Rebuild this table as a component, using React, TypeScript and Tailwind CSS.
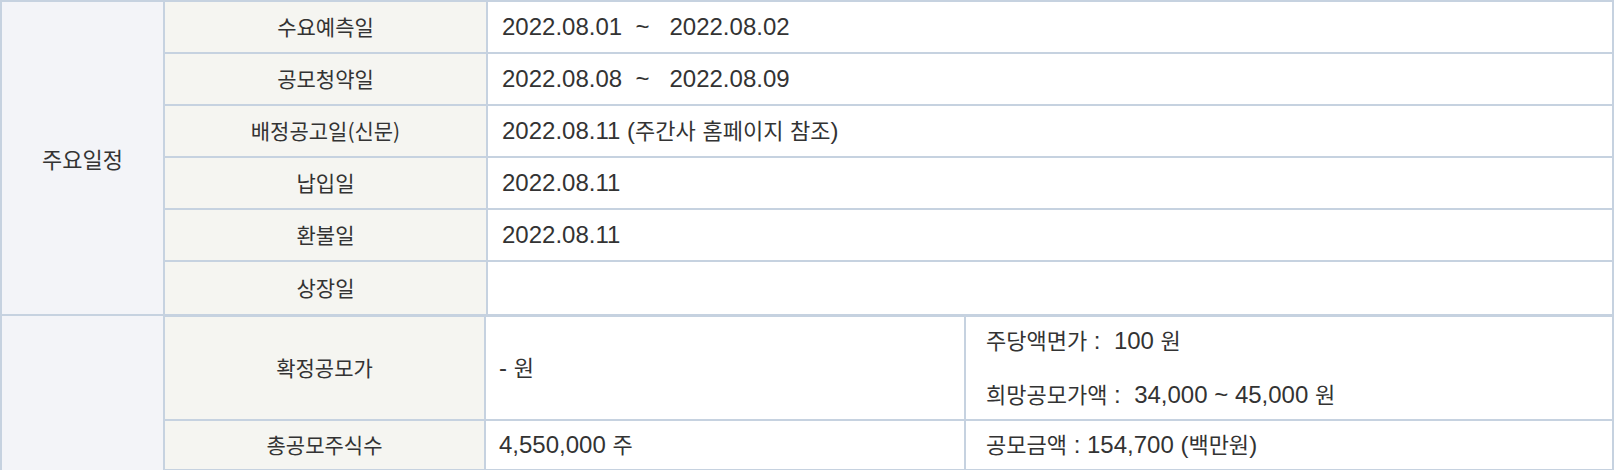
import React from 'react';

// hangul runs are set a bit smaller than the latin digits, like the original page
function Mixed({ text }: { text: string }) {
  const parts = text.split(/([\uAC00-\uD7A3]+)/);
  return (
    <>
      {parts.map((p, i) =>
        /[\uAC00-\uD7A3]/.test(p) ? (
          <span key={i} className="text-[22px]">
            {p}
          </span>
        ) : (
          <span key={i}>{p}</span>
        )
      )}
    </>
  );
}

const schedule = [
  { label: '수요예측일', value: '2022.08.01  ~   2022.08.02' },
  { label: '공모청약일', value: '2022.08.08  ~   2022.08.09' },
  { label: '배정공고일(신문)', value: '2022.08.11 (주간사 홈페이지 참조)' },
  { label: '납입일', value: '2022.08.11' },
  { label: '환불일', value: '2022.08.11' },
  { label: '상장일', value: '' },
];

const labelFont = "font-['Noto_Sans_CJK_KR',sans-serif] text-[21px]";
const valueFont = "font-['Liberation_Sans','Noto_Sans_CJK_KR',sans-serif] text-[24px]";

export default function App() {
  return (
    <div className="w-[1614px] h-[470px] bg-white text-[#333] overflow-hidden">
      {/* 주요일정 */}
      <div className="flex border-t-2 border-l-2 border-r-2 border-b-2 border-[#c6d2e0]">
        <div className="w-[163px] shrink-0 bg-[#f3f4f8] border-r-2 border-[#c6d2e0] flex items-center justify-center font-['Noto_Sans_CJK_KR',sans-serif] text-[22px]">
          주요일정
        </div>
        <div className="flex-1 flex flex-col">
          {schedule.map((row, i) => (
            <div
              key={row.label}
              className={`flex h-[52px] ${i < schedule.length - 1 ? 'border-b-2' : ''} border-[#c6d2e0]`}
            >
              <div
                className={`w-[323px] shrink-0 bg-[#f5f5f1] border-r-2 border-[#c6d2e0] flex items-center justify-center ${labelFont}`}
              >
                {row.label}
              </div>
              <div className={`flex-1 flex items-center pl-[14px] whitespace-pre ${valueFont}`}>
                <Mixed text={row.value} />
              </div>
            </div>
          ))}
        </div>
      </div>

      {/* 공모가 */}
      <div className="flex h-[156px] border-l-2 border-r-2 border-[#c6d2e0]">
        <div className="w-[163px] shrink-0 bg-[#f3f4f8] border-r-2 border-[#c6d2e0]" />
        <div className="flex-1 flex flex-col border-t border-b-2 border-[#c6d2e0] self-start">
          <div className="flex h-[104px] border-b-2 border-[#c6d2e0]">
            <div
              className={`w-[321px] shrink-0 bg-[#f5f5f1] border-r-2 border-[#c6d2e0] flex items-center justify-center ${labelFont}`}
            >
              확정공모가
            </div>
            <div
              className={`w-[480px] shrink-0 border-r-2 border-[#c6d2e0] flex items-center pl-[13px] whitespace-pre ${valueFont}`}
            >
              <Mixed text="- 원" />
            </div>
            <div
              className={`flex-1 flex flex-col justify-center gap-[23px] pl-[20px] whitespace-pre ${valueFont}`}
            >
              <div className="leading-[30px]">
                <Mixed text="주당액면가 :  100 원" />
              </div>
              <div className="leading-[30px]">
                <Mixed text="희망공모가액 :  34,000 ~ 45,000 원" />
              </div>
            </div>
          </div>
          <div className="flex h-[48px]">
            <div
              className={`w-[321px] shrink-0 bg-[#f5f5f1] border-r-2 border-[#c6d2e0] flex items-center justify-center ${labelFont}`}
            >
              총공모주식수
            </div>
            <div
              className={`w-[480px] shrink-0 border-r-2 border-[#c6d2e0] flex items-center pl-[13px] whitespace-pre ${valueFont}`}
            >
              <Mixed text="4,550,000 주" />
            </div>
            <div className={`flex-1 flex items-center pl-[20px] whitespace-pre ${valueFont}`}>
              <Mixed text="공모금액 : 154,700 (백만원)" />
            </div>
          </div>
        </div>
      </div>
    </div>
  );
}
